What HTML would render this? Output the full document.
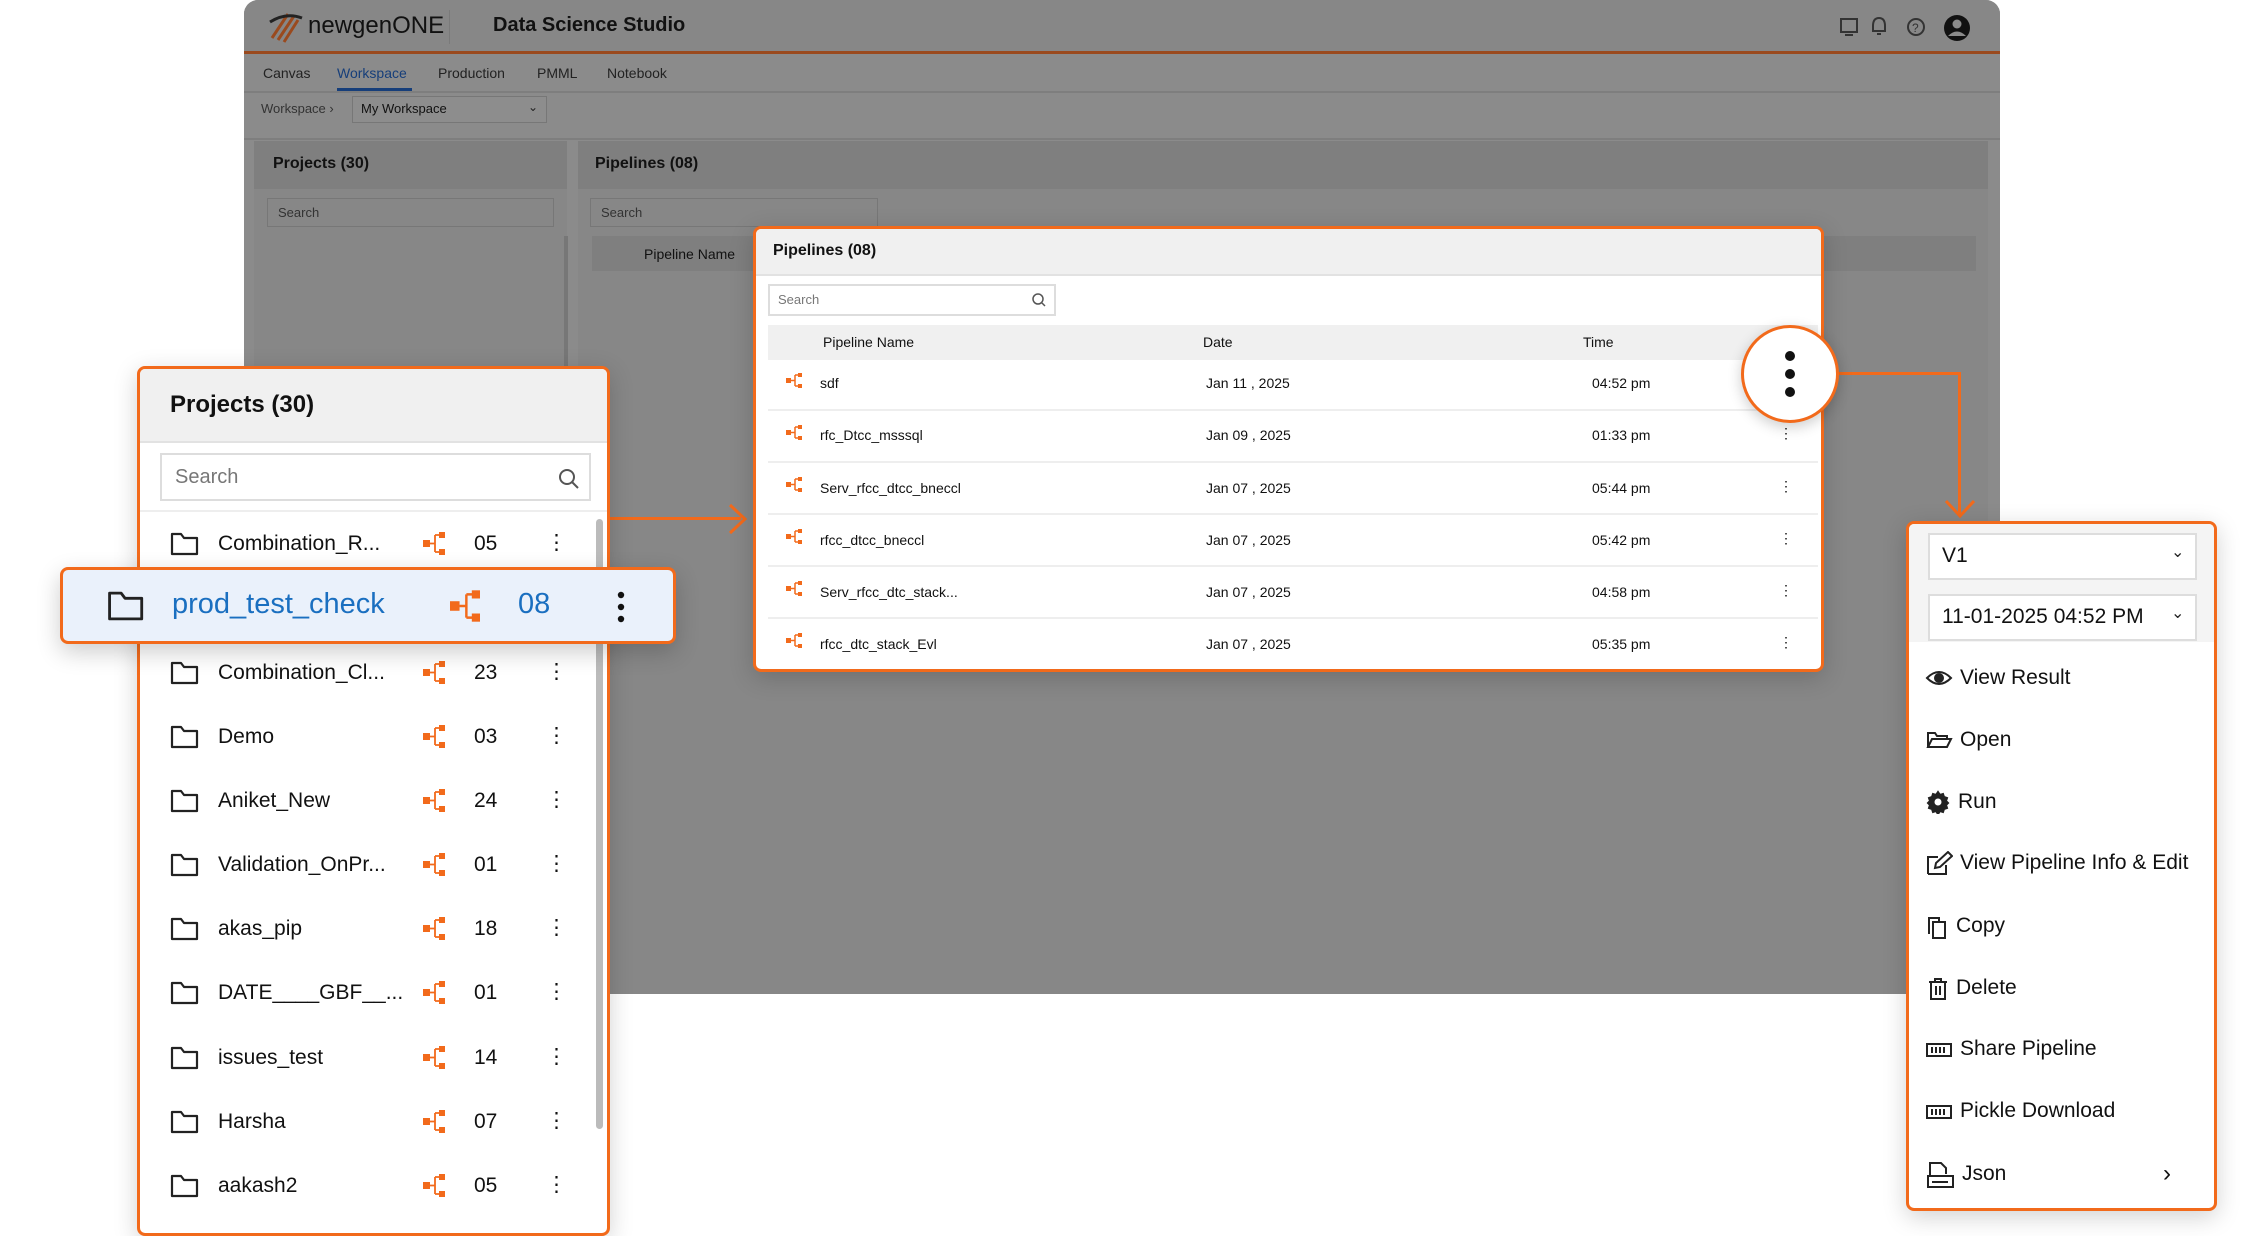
<!DOCTYPE html>
<html><head><meta charset="utf-8"><style>
*{box-sizing:border-box;margin:0;padding:0}
body{width:2252px;height:1220px;position:relative;background:#fff;font-family:"Liberation Sans",sans-serif;overflow:hidden;color:#222}
.a{position:absolute}
.app{left:244px;top:0;width:1756px;height:994px;background:#8b8b8b;border-radius:14px 14px 0 0;overflow:hidden}
.t{position:absolute;white-space:nowrap}
.or{border:3px solid #f26a1b;border-radius:8px;background:#fff;box-shadow:0 6px 24px rgba(0,0,0,.18)}
.row .t{font-size:21px}
.mi{position:absolute;left:1925px}
.mi *{stroke:#222;stroke-width:2;fill:none}
</style></head><body>
<div class="a app">
 <div class="a" style="left:0;top:0;width:1756px;height:54px;background:#878787;border-bottom:3px solid #9a4a1e"></div>
 <svg class="a" style="left:24px;top:8px" width="38" height="38" viewBox="0 0 38 38"><path d="M4 30 L20 6 M10 32 L26 8 M16 34 L30 12" stroke="#9a4a1e" stroke-width="3" fill="none"/><path d="M2 14 Q18 4 34 10" stroke="#222" stroke-width="3" fill="none"/></svg>
 <div class="t" style="left:64px;top:12px;font-size:24px;color:#111">newgen<span style="font-weight:300">ONE</span></div>
 <div class="a" style="left:205px;top:10px;width:1px;height:34px;background:#7a7a7a"></div>
 <div class="t" style="left:249px;top:14px;font-size:20px;font-weight:bold;color:#111">Data Science Studio</div>
 <svg class="a" style="left:1595px;top:14px" width="140" height="28" viewBox="0 0 140 28"><rect x="2" y="5" width="16" height="13" fill="none" stroke="#333" stroke-width="2"/><path d="M6 21 h8" stroke="#333" stroke-width="2"/><path d="M40 4 q-6 0 -6 8 v5 h12 v-5 q0 -8 -6 -8z M38 20 h4" fill="none" stroke="#333" stroke-width="2"/><circle cx="77" cy="13" r="8" fill="none" stroke="#333" stroke-width="2"/><text x="73" y="18" font-size="12" fill="#333" font-family="Liberation Sans">?</text><circle cx="118" cy="14" r="13" fill="#111"/><circle cx="118" cy="10" r="4.5" fill="#8b8b8b"/><path d="M109 22 q9 -9 18 0" fill="#8b8b8b"/></svg>
 <div class="t" style="left:19px;top:65px;font-size:14px;color:#222">Canvas</div>
 <div class="t" style="left:93px;top:65px;font-size:14px;color:#163e7a">Workspace</div>
 <div class="a" style="left:93px;top:88px;width:75px;height:3px;background:#163e7a"></div>
 <div class="t" style="left:194px;top:65px;font-size:14px;color:#222">Production</div>
 <div class="t" style="left:293px;top:65px;font-size:14px;color:#222">PMML</div>
 <div class="t" style="left:363px;top:65px;font-size:14px;color:#222">Notebook</div>
 <div class="a" style="left:0;top:91px;width:1756px;height:2px;background:#7e7e7e"></div>
 <div class="t" style="left:17px;top:101px;font-size:13px;color:#333">Workspace ›</div>
 <div class="a" style="left:108px;top:96px;width:195px;height:27px;border:1px solid #777;background:#8d8d8d"></div>
 <div class="t" style="left:117px;top:101px;font-size:13px;color:#111">My Workspace</div>
 <div class="t" style="left:284px;top:100px;font-size:12px">⌄</div>
 <div class="a" style="left:0;top:138px;width:1756px;height:2px;background:#7e7e7e"></div>
 <div class="a" style="left:10px;top:141px;width:313px;height:860px;background:#878787"></div>
 <div class="a" style="left:10px;top:141px;width:313px;height:48px;background:#7f7f7f"></div>
 <div class="t" style="left:29px;top:155px;font-size:16px;font-weight:bold;color:#111">Projects (30)</div>
 <div class="a" style="left:23px;top:198px;width:287px;height:29px;border:1px solid #777"></div>
 <div class="t" style="left:34px;top:205px;font-size:13px;color:#333">Search</div>
 <div class="a" style="left:320px;top:236px;width:4px;height:760px;background:#777"></div>
 <div class="a" style="left:334px;top:141px;width:1410px;height:860px;background:#878787"></div>
 <div class="a" style="left:334px;top:141px;width:1410px;height:48px;background:#7f7f7f"></div>
 <div class="t" style="left:351px;top:155px;font-size:16px;font-weight:bold;color:#111">Pipelines (08)</div>
 <div class="a" style="left:346px;top:198px;width:288px;height:29px;border:1px solid #777"></div>
 <div class="t" style="left:357px;top:205px;font-size:13px;color:#333">Search</div>
 <div class="a" style="left:348px;top:236px;width:1384px;height:35px;background:#7f7f7f"></div>
 <div class="t" style="left:400px;top:246px;font-size:14px;color:#111">Pipeline Name</div>
</div>

<div class="a" style="left:605px;top:517px;width:136px;height:3px;background:#f26a1b"></div>
<svg class="a" style="left:727px;top:503px" width="22" height="32"><path d="M3 2 L18 16 L3 30" stroke="#f26a1b" stroke-width="3" fill="none"/></svg>

<div class="a or" style="left:753px;top:226px;width:1071px;height:446px;overflow:hidden">
 <div class="a" style="left:0;top:0;width:1071px;height:47px;background:#f0f0f0;border-bottom:2px solid #e2e2e2"></div>
 <div class="t" style="left:17px;top:13px;font-size:16px;font-weight:bold;color:#111">Pipelines (08)</div>
 <div class="a" style="left:12px;top:55px;width:288px;height:32px;border:2px solid #ddd"></div>
 <div class="t" style="left:22px;top:63px;font-size:13px;color:#777">Search</div>
 <svg class="a" style="left:275px;top:63px" width="16" height="16"><circle cx="7" cy="7" r="5" stroke="#555" stroke-width="1.5" fill="none"/><path d="M11 11 L14 14" stroke="#555" stroke-width="1.5"/></svg>
 <div class="a" style="left:12px;top:96px;width:1050px;height:35px;background:#f0f0f0"></div>
 <div class="t" style="left:67px;top:105px;font-size:14px;color:#111">Pipeline Name</div>
 <div class="t" style="left:447px;top:105px;font-size:14px;color:#111">Date</div>
 <div class="t" style="left:827px;top:105px;font-size:14px;color:#111">Time</div>
</div>
<div class="a" style="left:756px;top:357px;width:1065px;height:312px">
 <div style="position:absolute;left:12px;top:52px;width:1050px;height:2px;background:#eee"></div>
 <div style="position:absolute;left:12px;top:104px;width:1050px;height:2px;background:#eee"></div>
 <div style="position:absolute;left:12px;top:156px;width:1050px;height:2px;background:#eee"></div>
 <div style="position:absolute;left:12px;top:208px;width:1050px;height:2px;background:#eee"></div>
 <div style="position:absolute;left:12px;top:260px;width:1050px;height:2px;background:#eee"></div>
</div>
<div class="a" style="left:0;top:0;font-size:14px;color:#111">
 <div class="t" style="left:820px;top:375px">sdf</div><div class="t" style="left:1206px;top:375px">Jan 11 , 2025</div><div class="t" style="left:1592px;top:375px">04:52 pm</div>
 <div class="t" style="left:820px;top:427px">rfc_Dtcc_msssql</div><div class="t" style="left:1206px;top:427px">Jan 09 , 2025</div><div class="t" style="left:1592px;top:427px">01:33 pm</div><div class="t" style="left:1779px;top:425px">⋮</div>
 <div class="t" style="left:820px;top:480px">Serv_rfcc_dtcc_bneccl</div><div class="t" style="left:1206px;top:480px">Jan 07 , 2025</div><div class="t" style="left:1592px;top:480px">05:44 pm</div><div class="t" style="left:1779px;top:478px">⋮</div>
 <div class="t" style="left:820px;top:532px">rfcc_dtcc_bneccl</div><div class="t" style="left:1206px;top:532px">Jan 07 , 2025</div><div class="t" style="left:1592px;top:532px">05:42 pm</div><div class="t" style="left:1779px;top:530px">⋮</div>
 <div class="t" style="left:820px;top:584px">Serv_rfcc_dtc_stack...</div><div class="t" style="left:1206px;top:584px">Jan 07 , 2025</div><div class="t" style="left:1592px;top:584px">04:58 pm</div><div class="t" style="left:1779px;top:582px">⋮</div>
 <div class="t" style="left:820px;top:636px">rfcc_dtc_stack_Evl</div><div class="t" style="left:1206px;top:636px">Jan 07 , 2025</div><div class="t" style="left:1592px;top:636px">05:35 pm</div><div class="t" style="left:1779px;top:634px">⋮</div>
</div>
<svg class="a" style="left:784px;top:370px" width="22" height="290">
 <g id="pi" fill="#f26a1b"><rect x="2" y="8" width="5" height="5"/><path d="M7 10.5 h4 M11 5 v11 M11 5 h3 M11 16 h3" stroke="#f26a1b" stroke-width="1.5" fill="none"/><rect x="14" y="3" width="4" height="4"/><rect x="14" y="14" width="4" height="4"/></g>
 <use href="#pi" y="52"/><use href="#pi" y="104"/><use href="#pi" y="156"/><use href="#pi" y="208"/><use href="#pi" y="260"/>
</svg>

<div class="a" style="left:1838px;top:372px;width:123px;height:3px;background:#f26a1b"></div>
<div class="a" style="left:1958px;top:372px;width:3px;height:142px;background:#f26a1b"></div>
<svg class="a" style="left:1944px;top:498px" width="32" height="22"><path d="M2 3 L16 18 L30 3" stroke="#f26a1b" stroke-width="3" fill="none"/></svg>
<div class="a" style="left:1741px;top:325px;width:98px;height:98px;border-radius:50%;border:3px solid #f26a1b;background:#fff;box-shadow:0 4px 14px rgba(0,0,0,.2)"></div>
<svg class="a" style="left:1780px;top:350px" width="20" height="50"><circle cx="10" cy="6" r="5" fill="#111"/><circle cx="10" cy="24" r="5" fill="#111"/><circle cx="10" cy="42" r="5" fill="#111"/></svg>

<div class="a or" style="left:137px;top:366px;width:473px;height:870px;overflow:hidden">
 <div class="a" style="left:0;top:0;width:473px;height:74px;background:#f0f0f0;border-bottom:2px solid #e2e2e2"></div>
 <div class="t" style="left:30px;top:22px;font-size:24px;font-weight:bold;color:#111">Projects (30)</div>
 <div class="a" style="left:20px;top:84px;width:431px;height:48px;border:2px solid #ddd"></div>
 <div class="t" style="left:35px;top:97px;font-size:20px;color:#777">Search</div>
 <svg class="a" style="left:417px;top:98px" width="24" height="24"><circle cx="10" cy="10" r="7" stroke="#555" stroke-width="2" fill="none"/><path d="M15 15 L21 21" stroke="#555" stroke-width="2"/></svg>
 <div class="a" style="left:0;top:141px;width:473px;height:2px;background:#eee"></div>
 <div class="a" style="left:456px;top:150px;width:7px;height:610px;background:#bbb;border-radius:4px"></div>
</div>
<svg class="a" style="left:0;top:0" width="1" height="1"><defs>
<g id="fo"><path d="M2 4 h9 l3 4 h13 v16 h-25z" fill="none" stroke="#222" stroke-width="2.2" stroke-linejoin="round"/></g>
<g id="bi"><rect x="0" y="8" width="7" height="7" fill="#f26a1b"/><path d="M7 11.5 h5 M12 3 v17 M12 3 h5 M12 20 h5" stroke="#f26a1b" stroke-width="1.8" fill="none"/><rect x="16" y="0" width="6" height="6" fill="#f26a1b"/><rect x="16" y="17" width="6" height="6" fill="#f26a1b"/></g>
</defs></svg>
<svg class="a" style="left:170px;top:520px" width="400" height="680">
 <use href="#fo" y="10"/><use href="#fo" y="139"/><use href="#fo" y="203"/><use href="#fo" y="267"/><use href="#fo" y="331"/><use href="#fo" y="395"/><use href="#fo" y="459"/><use href="#fo" y="524"/><use href="#fo" y="588"/><use href="#fo" y="652"/>
 <use href="#bi" x="253" y="12"/><use href="#bi" x="253" y="141"/><use href="#bi" x="253" y="205"/><use href="#bi" x="253" y="269"/><use href="#bi" x="253" y="333"/><use href="#bi" x="253" y="397"/><use href="#bi" x="253" y="461"/><use href="#bi" x="253" y="526"/><use href="#bi" x="253" y="590"/><use href="#bi" x="253" y="654"/>
</svg>
<div class="a row" style="left:0;top:0;color:#111">
 <div class="t" style="left:218px;top:532px">Combination_R...</div><div class="t" style="left:474px;top:532px">05</div><div class="t" style="left:546px;top:530px">⋮</div>
 <div class="t" style="left:218px;top:661px">Combination_Cl...</div><div class="t" style="left:474px;top:661px">23</div><div class="t" style="left:546px;top:659px">⋮</div>
 <div class="t" style="left:218px;top:725px">Demo</div><div class="t" style="left:474px;top:725px">03</div><div class="t" style="left:546px;top:723px">⋮</div>
 <div class="t" style="left:218px;top:789px">Aniket_New</div><div class="t" style="left:474px;top:789px">24</div><div class="t" style="left:546px;top:787px">⋮</div>
 <div class="t" style="left:218px;top:853px">Validation_OnPr...</div><div class="t" style="left:474px;top:853px">01</div><div class="t" style="left:546px;top:851px">⋮</div>
 <div class="t" style="left:218px;top:917px">akas_pip</div><div class="t" style="left:474px;top:917px">18</div><div class="t" style="left:546px;top:915px">⋮</div>
 <div class="t" style="left:218px;top:981px">DATE____GBF__...</div><div class="t" style="left:474px;top:981px">01</div><div class="t" style="left:546px;top:979px">⋮</div>
 <div class="t" style="left:218px;top:1046px">issues_test</div><div class="t" style="left:474px;top:1046px">14</div><div class="t" style="left:546px;top:1044px">⋮</div>
 <div class="t" style="left:218px;top:1110px">Harsha</div><div class="t" style="left:474px;top:1110px">07</div><div class="t" style="left:546px;top:1108px">⋮</div>
 <div class="t" style="left:218px;top:1174px">aakash2</div><div class="t" style="left:474px;top:1174px">05</div><div class="t" style="left:546px;top:1172px">⋮</div>
</div>
<div class="a" style="left:60px;top:567px;width:616px;height:77px;border:3px solid #f26a1b;border-radius:8px;background:#eaf1fb;box-shadow:0 8px 24px rgba(0,0,0,.2)"></div>
<svg class="a" style="left:105px;top:588px" width="40" height="36" viewBox="0 0 28 28"><use href="#fo"/></svg>
<div class="t" style="left:172px;top:588px;font-size:29px;color:#1a6fc0">prod_test_check</div>
<svg class="a" style="left:450px;top:590px" width="30" height="32" viewBox="0 0 22 23"><use href="#bi"/></svg>
<div class="t" style="left:518px;top:588px;font-size:29px;color:#1a6fc0">08</div>
<svg class="a" style="left:616px;top:590px" width="10" height="34"><circle cx="5" cy="5" r="3.2" fill="#111"/><circle cx="5" cy="17" r="3.2" fill="#111"/><circle cx="5" cy="29" r="3.2" fill="#111"/></svg>

<div class="a or" style="left:1906px;top:521px;width:311px;height:690px;overflow:hidden">
 <div class="a" style="left:0;top:0;width:311px;height:118px;background:#f4f4f4"></div>
 <div class="a" style="left:19px;top:9px;width:269px;height:47px;border:2px solid #ddd;background:#fff"></div>
 <div class="t" style="left:33px;top:20px;font-size:21px;color:#111">V1</div>
 <div class="t" style="left:262px;top:18px;font-size:16px">⌄</div>
 <div class="a" style="left:19px;top:70px;width:269px;height:47px;border:2px solid #ddd;background:#fff"></div>
 <div class="t" style="left:33px;top:81px;font-size:21px;color:#111">11-01-2025 04:52 PM</div>
 <div class="t" style="left:262px;top:79px;font-size:16px">⌄</div>
</div>
<svg class="mi" style="top:666px" width="28" height="24" viewBox="0 0 28 24"><path d="M2 12 q12 -12 24 0 q-12 12 -24 0z"/><circle cx="14" cy="12" r="4" style="fill:#222"/></svg>
<svg class="mi" style="top:728px" width="28" height="24" viewBox="0 0 28 24"><path d="M3 19 v-14 h7 l2 3 h10 v4 M3 19 l4 -8 h19 l-4 8z"/></svg>
<svg class="mi" style="top:790px" width="26" height="24" viewBox="0 0 24 24"><path d="M12 2 l2 3 3 -1 1 3 3 1 -1 3 2 2 -2 2 1 3 -3 1 -1 3 -3 -1 -2 3 -2 -3 -3 1 -1 -3 -3 -1 1 -3 -2 -2 2 -2 -1 -3 3 -1 1 -3 3 1z" style="fill:#222"/><circle cx="12" cy="12" r="3.5" style="fill:#fff;stroke:none"/></svg>
<svg class="mi" style="top:851px" width="28" height="26" viewBox="0 0 28 26"><path d="M3 23 v-17 h10 M3 23 h18 v-9 M10 17 l1 -5 12 -11 4 4 -12 11z"/></svg>
<svg class="mi" style="top:914px" width="26" height="26" viewBox="0 0 26 26"><path d="M4 20 v-16 h10 v3 M8 24 v-16 h12 v16z"/></svg>
<svg class="mi" style="top:976px" width="26" height="26" viewBox="0 0 26 26"><path d="M4 6 h18 M10 6 v-3 h6 v3 M6 6 v17 h14 v-17 M11 10 v9 M15 10 v9"/></svg>
<svg class="mi" style="top:1038px" width="28" height="24" viewBox="0 0 28 24"><rect x="2" y="6" width="24" height="12"/><path d="M7 9 v6 M11 9 v6 M15 9 v6 M19 9 v6"/></svg>
<svg class="mi" style="top:1100px" width="28" height="24" viewBox="0 0 28 24"><rect x="2" y="6" width="24" height="12"/><path d="M7 9 v6 M11 9 v6 M15 9 v6 M19 9 v6"/></svg>
<svg class="mi" style="top:1160px" width="30" height="30" viewBox="0 0 30 30"><path d="M5 16 v-13 h11 l5 5 v6 M3 16 h25 v11 h-25z M7 22 h16"/></svg>
<div class="a" style="left:0;top:0;font-size:21px;color:#111">
 <div class="t" style="left:1960px;top:666px">View Result</div>
 <div class="t" style="left:1960px;top:728px">Open</div>
 <div class="t" style="left:1958px;top:790px">Run</div>
 <div class="t" style="left:1960px;top:851px">View Pipeline Info &amp; Edit</div>
 <div class="t" style="left:1956px;top:914px">Copy</div>
 <div class="t" style="left:1956px;top:976px">Delete</div>
 <div class="t" style="left:1960px;top:1037px">Share Pipeline</div>
 <div class="t" style="left:1960px;top:1099px">Pickle Download</div>
 <div class="t" style="left:1962px;top:1162px">Json</div>
 <div class="t" style="left:2163px;top:1160px;font-size:24px">›</div>
</div>
</body></html>
